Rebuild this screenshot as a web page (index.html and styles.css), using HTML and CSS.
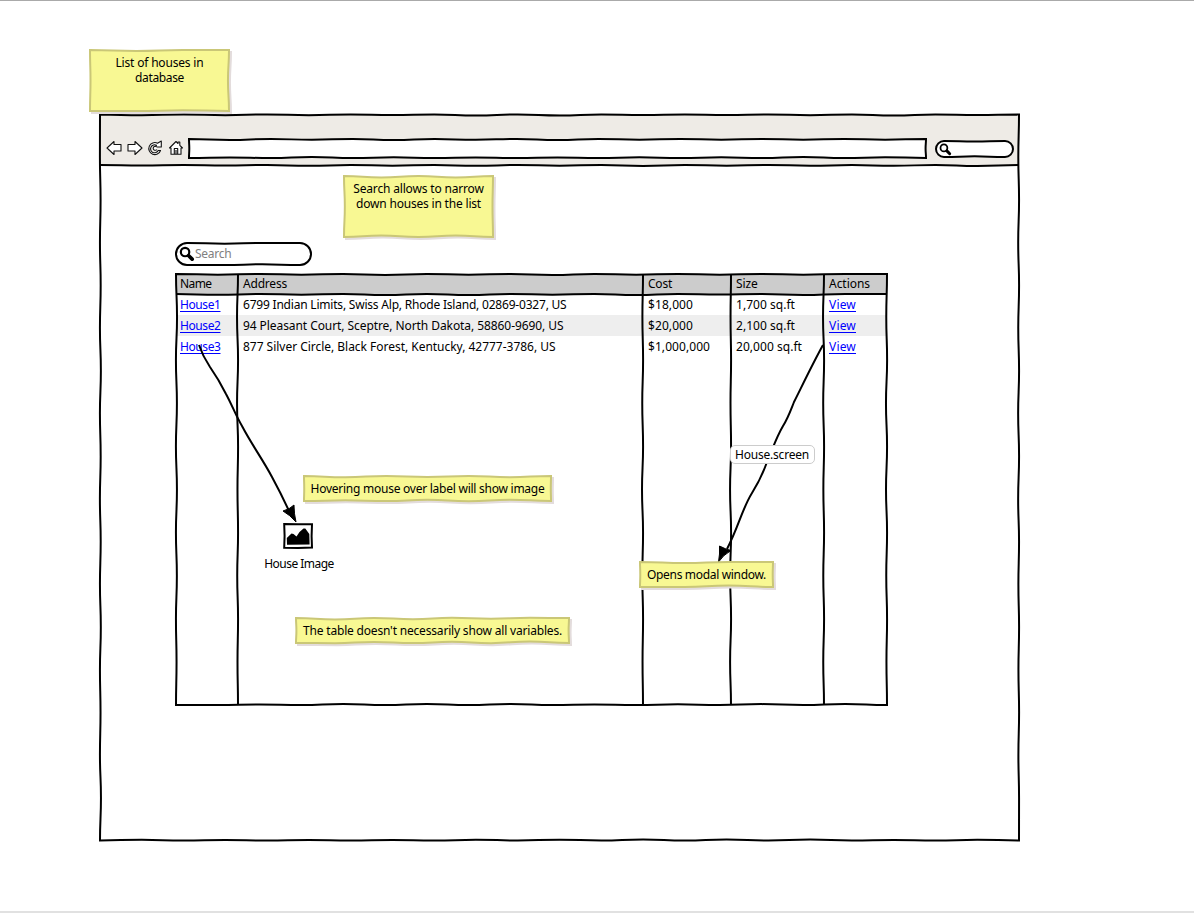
FILE: index.html
```html
<!DOCTYPE html>
<html lang="en">
<head>
<meta charset="utf-8">
<title>List of houses</title>
<link rel="stylesheet" href="styles.css">
</head>
<body>
<main class="canvas">
  <section class="browser">
    <header class="toolbar" data-sketch="rule">
      <svg class="nav-icons" viewBox="0 0 80 20" width="80" height="20">
        <path d="M1 10 8 3.500v3h7v6.500H8v3.500z"/>
        <path d="M36 10 29 3.500v3h-7v6.500h7v3.500z"/>
        <path d="M51.500 5.200A6 6 0 1 0 54.500 12.500h-2.300A4 4 0 1 1 50.500 7.300L48.800 9h6.500V3z"/>
        <path d="M50.500 8.800A2 2 0 1 0 50.800 11.500"/>
        <path d="M63.500 10 70 3.500l2 2V4h1.800v3.300L76.500 10H75v6.300H65V10zM68.300 16v-5.500h3.400V16M70 12v4"/>
      </svg>
      <div class="address-bar" data-sketch></div>
      <div class="mini-search" data-sketch="pill">
        <svg class="lens" viewBox="0 0 14 14"><circle cx="5.300" cy="5.300" r="3.700"/><path d="M8.500 8.500l3 3"/></svg>
      </div>
    </header>
    <div class="page">
      <div class="search" data-sketch="pill">
        <svg class="lens" viewBox="0 0 14 14"><circle cx="5.300" cy="5.300" r="3.700"/><path d="M8.500 8.500l3 3"/></svg>
        <span class="t" data-w="36.500">Search</span>
      </div>
      <div class="table" data-sketch>
        <div class="row head"><span class="t" data-w="31.500">Name</span><span class="t" data-w="44">Address</span><span class="t" data-w="24">Cost</span><span class="t" data-w="21.500">Size</span><span class="t" data-w="41">Actions</span></div>
        <div class="row"><a class="t" data-w="40.500">House1</a><span class="t" data-w="323.500">6799 Indian Limits, Swiss Alp, Rhode Island, 02869-0327, US</span><span class="t" data-w="45">$18,000</span><span class="t" data-w="59">1,700 sq.ft</span><a class="t" data-w="27">View</a></div>
        <div class="row alt"><a class="t" data-w="40.500">House2</a><span class="t" data-w="320.500">94 Pleasant Court, Sceptre, North Dakota, 58860-9690, US</span><span class="t" data-w="45">$20,000</span><span class="t" data-w="59">2,100 sq.ft</span><a class="t" data-w="27">View</a></div>
        <div class="row"><a class="t" data-w="40.500">House3</a><span class="t" data-w="312.500">877 Silver Circle, Black Forest, Kentucky, 42777-3786, US</span><span class="t" data-w="62">$1,000,000</span><span class="t" data-w="66">20,000 sq.ft</span><a class="t" data-w="27">View</a></div>
        <svg class="rules"></svg>
      </div>
    </div>
    <svg class="frame"></svg>
  </section>

  <svg class="arrows" viewBox="0 0 1194 913">
    <path class="line" d="M199 345C202 354 206 361 210 367C217 377 221 384 226 394C232 405 236 416 242 426C252 445 263 460 272 477C278 488 284 500 290 513"/>
    <path class="tip" d="M283 511Q290 509 294 505Q294 514 296 522Q290 515 283 511z"/>
    <path class="line" d="M823 345C813 363 803 384 794 402C790 412 788 418 783 426C776 438 773 448 767 462C762 476 759 482 752 493C742 509 739 526 727 549"/>
    <path class="tip" d="M719.500 546Q725 549 731 550.500Q723 555 718.500 562Q720 554 719.500 546z"/>
  </svg>
  <div class="link-label"><span class="t" data-w="74">House.screen</span></div>

  <div class="note n1" data-sketch="note"><span class="t" data-w="88">List of houses in</span><span class="t" data-w="49">database</span></div>
  <div class="note n2" data-sketch="note"><span class="t" data-w="130.500">Search allows to narrow</span><span class="t" data-w="125">down houses in the list</span></div>
  <div class="note n3" data-sketch="note"><span class="t" data-w="234">Hovering mouse over label will show image</span></div>
  <div class="note n4" data-sketch="note"><span class="t" data-w="259">The table doesn't necessarily show all variables.</span></div>
  <div class="note n5" data-sketch="note"><span class="t" data-w="119">Opens modal window.</span></div>

  <figure class="picture">
    <svg viewBox="0 0 32 28" width="32" height="28"><path class="box" d="M2.200 3 16 3.300l14-.1-.4 12 .4 11.400L16 27l-13.800-.2.400-12z"/><path d="M5 23.800 4.800 17 9.500 12.500l2 .5 3 2.500 3-4.500 4-3.500h1.800L27.300 13l.3 10.600z"/></svg>
    <figcaption class="t" data-w="69.500">House Image</figcaption>
  </figure>
</main>
<script src="sketch.js"></script>
</body>
</html>
```
FILE: styles.css
```css
* { box-sizing: border-box; }
body {
  margin: 0;
  background: #fff;
  color: #000;
  font: 12px/15px "Noto Sans", "Open Sans", sans-serif;
}
.canvas {
  position: relative;
  width: 1194px;
  height: 913px;
  padding: 114px 0 0 100px;
  box-shadow: inset 0 1px #aaa, inset 0 -2px #e1e1e1;
  overflow: hidden;
}
.t { white-space: nowrap; }
.browser {
  position: relative;
  width: 919px;
  height: 727px;
}
.toolbar {
  position: relative;
  display: flex;
  align-items: center;
  height: 51px;
  padding: 18px 5px 0 6px;
  background: #eeebe6;
}
.nav-icons { flex: none; width: 80px; height: 20px; margin-bottom: 2px; fill: #fff; stroke: #111; stroke-width: 1.100; stroke-linejoin: round; }
.address-bar {
  position: relative;
  width: 737px;
  height: 19px;
  margin-left: 3px;
  background: #fff;
}
.mini-search {
  position: relative;
  display: flex;
  width: 77px;
  height: 16px;
  margin-left: 10px;
  padding: 2px 3px;
  border-radius: 8px;
  background: #fff;
}
.lens { flex: none; width: 14px; height: 14px; fill: none; stroke: #000; stroke-width: 1.900; stroke-linecap: round; }
.lens path { stroke-width: 3.200; }
.mini-search .lens { width: 13px; height: 13px; }
.page { padding: 78px 0 0 76px; }
.search {
  position: relative;
  display: flex;
  align-items: center;
  width: 135px;
  height: 22px;
  padding-left: 3px;
  border-radius: 11px;
  color: #808080;
}
.search .lens { width: 16px; height: 16px; }
.search .t { padding-bottom: 2px; }
.table {
  position: relative;
  width: 711px;
  height: 431px;
  margin-top: 9px;
}
.row {
  display: grid;
  grid-template-columns: 62px 405px 88px 93px 63px;
  height: 21px;
  align-items: center;
}
.row > * { justify-self: start; margin-left: 5px; }
.row > :first-child { margin-left: 4px; }
.row.head { height: 20px; padding-bottom: 2px; background: #ccc; }
.row.alt { background: #eee; }
.row a {
  color: #00f;
  text-decoration: underline;
  text-decoration-thickness: 1px;
  text-decoration-skip-ink: none;
  text-underline-offset: 2px;
}
.sketch, .rules, .frame, .arrows {
  position: absolute;
  left: 0;
  top: 0;
  width: 100%;
  height: 100%;
  overflow: visible;
  fill: none;
  stroke: #000;
  stroke-width: 2;
  pointer-events: none;
}
.arrows .tip { fill: #000; stroke-width: 1; }
.link-label {
  position: absolute;
  left: 730px;
  top: 445px;
  width: 85px;
  height: 19px;
  padding: 1px 4px;
  border: 1px solid #ccc;
  border-radius: 5px;
  background: #fff;
}
.note {
  position: absolute;
  display: flex;
  flex-direction: column;
  align-items: center;
  padding-top: 5px;
}
.note .sketch { fill: #f8f893; stroke: #cac777; filter: drop-shadow(2px 2px 0 #e3dcdc); }
.note .t { position: relative; }
.n1 { left: 90px; top: 50px; width: 139px; height: 61px; }
.n2 { left: 344px; top: 176px; width: 149px; height: 61px; }
.n3 { left: 304px; top: 476px; width: 247px; height: 25px; }
.n4 { left: 296px; top: 618px; width: 273px; height: 25px; }
.n5 { left: 640px; top: 562px; width: 133px; height: 25px; }
.picture {
  position: absolute;
  left: 259px;
  top: 521px;
  width: 80px;
  margin: 0;
  display: flex;
  flex-direction: column;
  align-items: center;
  gap: 7px;
}
.picture svg { margin-right: 2px; }
.picture .box { fill: #fff; stroke: #000; stroke-width: 2; }
```
FILE: sketch.js
```js
const NS = 'http://www.w3.org/2000/svg';
let seed = 7;
const rand = () => (seed = (seed * 16807) % 2147483647) / 2147483647;

// Hand-drawn segment: smooth knots that drift slightly around the edge
function edge(x1, y1, x2, y2, amp = 0.9) {
  const len = Math.hypot(x2 - x1, y2 - y1);
  const n = Math.max(2, Math.round(len / 42));
  const nx = -(y2 - y1) / len, ny = (x2 - x1) / len;
  let d = '', px = x1, py = y1;
  for (let i = 1; i <= n; i++) {
    const k = i === n ? 0 : (i % 2 ? 1 : -0.1) * amp * (0.5 + rand() * 0.6);
    const x = x1 + (x2 - x1) * i / n + nx * k;
    const y = y1 + (y2 - y1) * i / n + ny * k;
    const h = Math.abs(x2 - x1) > Math.abs(y2 - y1);
    d += h ? `C${(px + x) / 2} ${py} ${(px + x) / 2} ${y} ${x} ${y}`
           : `C${px} ${(py + y) / 2} ${x} ${(py + y) / 2} ${x} ${y}`;
    px = x; py = y;
  }
  return d;
}
function add(svg, d) {
  const p = document.createElementNS(NS, 'path');
  p.setAttribute('d', d);
  svg.appendChild(p);
}
const box = (w, h, a, s = a) => `M0 0${edge(0, 0, w, 0, a)}${edge(w, 0, w, h, s)}${edge(w, h, 0, h, a)}${edge(0, h, 0, 0, s)}z`;
const pill = (w, h, r) => `M${r} 0${edge(r, 0, w - r, 0)}A${r} ${r} 0 0 1 ${w - r} ${h}${edge(w - r, h, r, h)}A${r} ${r} 0 0 1 ${r} 0z`;

document.querySelectorAll('[data-sketch]').forEach(el => {
  const svg = document.createElementNS(NS, 'svg');
  svg.setAttribute('class', 'sketch');
  const w = el.offsetWidth, h = el.offsetHeight;
  const kind = el.dataset.sketch;
  if (kind === 'pill') add(svg, pill(w, h, h / 2));
  else if (kind === 'rule') add(svg, `M0 ${h}${edge(0, h, w, h)}`);
  else add(svg, box(w, h, kind === 'note' ? 1.4 : 1, h < 30 ? 0.4 : 1));
  el.prepend(svg);
});

const frame = document.querySelector('.frame');
add(frame, `M0 0.5${edge(0, 0.5, 919, 0.5)}${edge(919, 0.5, 919, 726.5)}${edge(919, 726.5, 0, 726.5)}${edge(0, 726.5, 0, 0.5)}z`);
const rules = document.querySelector('.rules');
[62, 467, 555, 648].forEach(x => add(rules, `M${x} 0${edge(x, 0, x, 431)}`));
add(rules, `M0 20${edge(0, 20, 711, 20)}`);

// Fit each label's tracking to its intended measure
document.querySelectorAll('[data-w]').forEach(el => {
  const range = document.createRange();
  range.selectNodeContents(el);
  const n = el.textContent.length;
  const gap = (el.dataset.w - range.getBoundingClientRect().width) / n;
  el.style.letterSpacing = gap + 'px';
});
```
